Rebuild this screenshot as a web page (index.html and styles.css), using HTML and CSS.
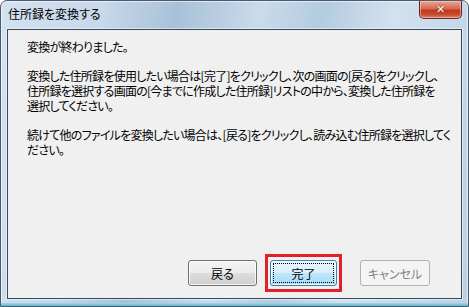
FILE: index.html
```html
<!DOCTYPE html>
<html lang="ja">
<head>
<meta charset="utf-8">
<link rel="stylesheet" href="styles.css">
</head>
<body>
<div class="window">
  <div class="titlebar">
    <span class="title">住所録を変換する</span>
    <div class="close"><span class="x">✕</span></div>
  </div>
  <div class="client">
    <div class="message">
      <p>変換が終わりました。</p>
      <p>変換した住所録を使用したい場合は[完了]をクリックし、次の画面の[戻る]をクリックし、<br>住所録を選択する画面の[今までに作成した住所録]リストの中から、変換した住所録を<br>選択してください。</p>
      <p>続けて他のファイルを変換したい場合は、[戻る]をクリックし、読み込む住所録を選択してく<br>ださい。</p>
    </div>
    <div class="buttons">
      <button class="btn">戻る</button>
      <div class="highlight"><button class="btn default"><span class="focus">完了</span></button></div>
      <button class="btn disabled">キャンセル</button>
    </div>
  </div>
</div>
</body>
</html>
```
FILE: styles.css
```css
* { box-sizing: border-box; }
html, body { margin: 0; padding: 0; background: #ffffff; }
body { width: 469px; height: 307px; overflow: hidden; font-family: "Noto Sans CJK JP", "Noto Sans", sans-serif; }
.window {
  width: 469px; height: 307px;
  border: 1px solid #4a5a6c;
  border-radius: 7px 7px 0 0;
  background: linear-gradient(100deg, #d3e2f0 0%, #c6d8ea 20%, #a9c1d8 34%, #b8cde1 42%, #c9dbec 50%, #b4cbe0 62%, #d2e1ef 76%, #bcd0e3 100%);
  display: flex; flex-direction: column;
  box-shadow: inset 0 0 0 1px rgba(255,255,255,0.6);
  position: relative;
}
.window::after {
  content: ""; position: absolute; left: 0; right: 0; bottom: 0; height: 3px;
  background: linear-gradient(#9fd7ea, #5fb6d8);
}
.titlebar {
  height: 28px; display: flex; align-items: flex-start; padding-left: 7px;
}
.title { font-size: 12px; line-height: 14px; margin-top: 6px; color: #000; font-feature-settings: "palt"; }
.close {
  margin-left: auto; margin-right: 6px;
  width: 43px; height: 18px;
  border: 1px solid #5b2a22; border-top: none;
  border-radius: 0 0 5px 5px;
  background: linear-gradient(#e9a594 0%, #d66a52 45%, #c2381f 55%, #c84a30 80%, #e3866a 100%);
  box-shadow: inset 0 0 0 1px rgba(255,220,210,0.5);
  display: flex; align-items: center; justify-content: center;
}
.x { color: #fff; font-family: "DejaVu Sans", sans-serif; font-weight: bold; font-size: 11px; line-height: 11px; text-shadow: 0 0 2px #6a1d12; }
.client {
  flex: 1; margin: 0 6px 7px 6px;
  border: 1px solid #34495e;
  background: #f0f0f0;
  display: flex; flex-direction: column;
  box-shadow: 0 0 0 1px rgba(255,255,255,0.5);
}
.message { padding: 9px 0 0 19px; font-size: 12px; line-height: 15px; color: #000; font-feature-settings: "palt"; letter-spacing: -0.75px; }
.message p { margin: 0 0 14px 0; white-space: nowrap; }
.buttons {
  margin-top: auto; display: flex; align-items: center; justify-content: flex-end;
  padding: 0 31px 6px 0; gap: 0;
}
.btn {
  width: 69px; height: 26px; font-family: inherit; font-size: 12px; color: #000;
  border: 1px solid #707070; border-radius: 3px;
  background: linear-gradient(#f3f3f3 0%, #ececec 48%, #dddddd 52%, #cfcfcf 100%);
  box-shadow: inset 0 0 0 1px rgba(255,255,255,0.8);
  padding: 0; font-feature-settings: "palt";
}
.highlight { border: 3px solid #e0212b; padding: 3px 2px; margin: 0 18px 0 8px; }
.btn.default {
  width: 67px; border-color: #3c7fb1;
  background: linear-gradient(#eaf6fd 0%, #d9f0fc 48%, #bee6fd 52%, #a7d9f5 100%);
  display: flex; align-items: center; justify-content: center; padding: 2px;
}
.focus { display: flex; align-items: center; justify-content: center; width: 100%; height: 100%; border: 1px dotted #000; }
.btn.disabled { width: 70px; color: #838383; border-color: #adb2b5; background: #f4f4f4; box-shadow: none; }
```
